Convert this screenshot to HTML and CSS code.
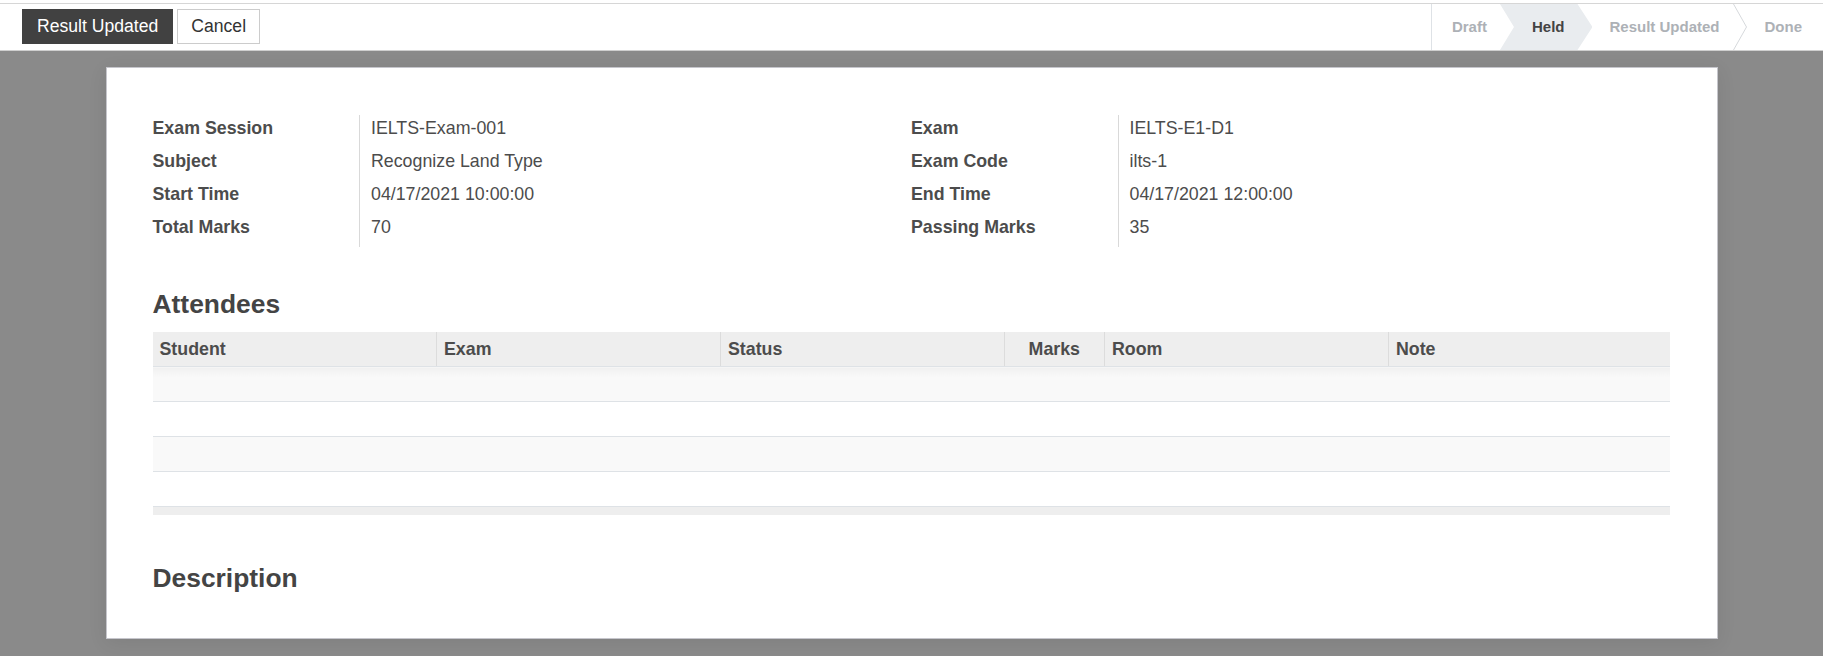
FILE: index.html
```html
<!DOCTYPE html>
<html>
<head>
    <title>Exam - IELTS-Exam-001</title>
    <link rel="stylesheet" href="styles.css">
</head>
<body>
    <div class="control-panel">
        <div class="buttons">
            <button class="btn btn-primary">Result Updated</button>
            <button class="btn btn-secondary">Cancel</button>
        </div>
        <div class="statusbar">
            <span class="step step-draft">Draft</span>
            <span class="step step-current">Held</span>
            <span class="step step-result">Result Updated</span>
            <svg class="chevron" width="14" height="46" viewBox="0 0 14 46">
                <polyline points="0.5,0 13.5,23 0.5,46" fill="none" stroke="#d6d9dc" stroke-width="1"/>
            </svg>
            <span class="step step-done">Done</span>
        </div>
    </div>

    <div class="content">
        <div class="sheet">
            <div class="groups">
                <table class="group">
                    <tr><td class="label">Exam Session</td><td class="value">IELTS-Exam-001</td></tr>
                    <tr><td class="label">Subject</td><td class="value">Recognize Land Type</td></tr>
                    <tr><td class="label">Start Time</td><td class="value">04/17/2021 10:00:00</td></tr>
                    <tr><td class="label">Total Marks</td><td class="value">70</td></tr>
                </table>
                <table class="group">
                    <tr><td class="label">Exam</td><td class="value">IELTS-E1-D1</td></tr>
                    <tr><td class="label">Exam Code</td><td class="value">ilts-1</td></tr>
                    <tr><td class="label">End Time</td><td class="value">04/17/2021 12:00:00</td></tr>
                    <tr><td class="label">Passing Marks</td><td class="value">35</td></tr>
                </table>
            </div>

            <h3 class="section-title">Attendees</h3>
            <table class="list">
                <colgroup>
                    <col class="col-wide">
                    <col class="col-wide">
                    <col class="col-wide">
                    <col class="col-marks">
                    <col class="col-wide">
                    <col>
                </colgroup>
                <thead>
                    <tr>
                        <th>Student</th>
                        <th>Exam</th>
                        <th>Status</th>
                        <th class="num">Marks</th>
                        <th>Room</th>
                        <th>Note</th>
                    </tr>
                </thead>
                <tbody>
                    <tr class="first"><td colspan="6"></td></tr>
                    <tr><td colspan="6"></td></tr>
                    <tr><td colspan="6"></td></tr>
                    <tr><td colspan="6"></td></tr>
                </tbody>
                <tfoot>
                    <tr><td colspan="6"></td></tr>
                </tfoot>
            </table>

            <h3 class="section-title description">Description</h3>
        </div>
    </div>
</body>
</html>
```

FILE: styles.css
```css
body {
    font-family: "Liberation Sans", Arial, sans-serif;
    font-size: 17.8px;
    color: #4c4c4c;
    background-color: #ffffff;
    margin: 0;
    padding: 0;
}
.control-panel {
    margin-top: 3px;
    height: 46px;
    border-top: 1px solid #d6d6d6;
    border-bottom: 1px solid #cfcfcf;
    display: flex;
    justify-content: space-between;
    align-items: stretch;
    background-color: #ffffff;
}
.buttons {
    display: flex;
    align-items: center;
    gap: 4px;
    padding-left: 22px;
    padding-bottom: 1px;
}
.btn {
    font-family: inherit;
    font-size: 17.6px;
    height: 35px;
    padding: 0 14px;
    border: 1px solid transparent;
    border-radius: 0;
    cursor: pointer;
}
.btn-primary {
    background-color: #414141;
    border-color: #414141;
    color: #ffffff;
}
.btn-secondary {
    padding: 0 13px;
    background-color: #ffffff;
    border-color: #cccccc;
    color: #333333;
}
.statusbar {
    display: flex;
    align-items: stretch;
    border-left: 1px solid #dee2e6;
}
.step {
    display: flex;
    align-items: center;
    padding-bottom: 2px;
    font-size: 15px;
    font-weight: bold;
    color: #adb1b6;
}
.step-draft {
    padding-left: 20px;
    padding-right: 13px;
}
.step-current {
    padding-left: 32px;
    padding-right: 28px;
    background-color: #e9ecef;
    color: #444444;
    clip-path: polygon(0 0, calc(100% - 15px) 0, 100% 50%, calc(100% - 15px) 100%, 0 100%, 14px 50%);
}
.step-result {
    padding-left: 17px;
    padding-right: 13px;
}
.chevron {
    display: block;
}
.step-done {
    padding-left: 18px;
    padding-right: 21px;
}
.content {
    background-color: #8a8a8a;
    padding: 16px 0 17px;
}
.sheet {
    width: 1612px;
    box-sizing: border-box;
    margin: 0 auto;
    background-color: #ffffff;
    border: 1px solid #c6c6cc;
    box-shadow: 0 4px 18px rgba(0, 0, 0, 0.08);
    padding: 47px 47px 44px 46px;
}
.groups {
    display: grid;
    grid-template-columns: 1fr 1fr;
}
.group {
    border-collapse: collapse;
}
.group td {
    height: 33px;
    padding: 0 0 7px;
    line-height: 26px;
    box-sizing: border-box;
    vertical-align: top;
    white-space: nowrap;
}
.group .label {
    width: 207px;
    font-weight: bold;
    border-right: 1px solid #d9d9d9;
}
.group .value {
    padding-left: 11px;
}
.section-title {
    font-size: 26.4px;
    line-height: 32px;
    font-weight: bold;
    color: #444444;
    margin: 41px 0 12px;
}
.description {
    margin: 47px 0 0;
}
.list {
    width: 100%;
    border-collapse: collapse;
    table-layout: fixed;
}
.col-wide {
    width: 284px;
}
.col-marks {
    width: 100px;
}
.list th {
    height: 34px;
    padding: 0 7px;
    text-align: left;
    font-weight: bold;
    background-color: #eeeeee;
    border-bottom: 1px solid #dee2e6;
    border-left: 1px solid #dcdcdc;
}
.list th:first-child {
    border-left: none;
}
.list th.num {
    text-align: right;
    padding-right: 24px;
}
.list tbody td {
    height: 34px;
    padding: 0;
    border-bottom: 1px solid #dee2e6;
}
.list tbody tr:nth-child(odd) td {
    background-color: #f9f9f9;
}
.list tbody tr.first td {
    background-image: linear-gradient(to bottom, #f0f0f0, #f9f9f9 10px);
}
.list tfoot td {
    height: 8px;
    padding: 0;
    background-color: #eeeeee;
}
```
